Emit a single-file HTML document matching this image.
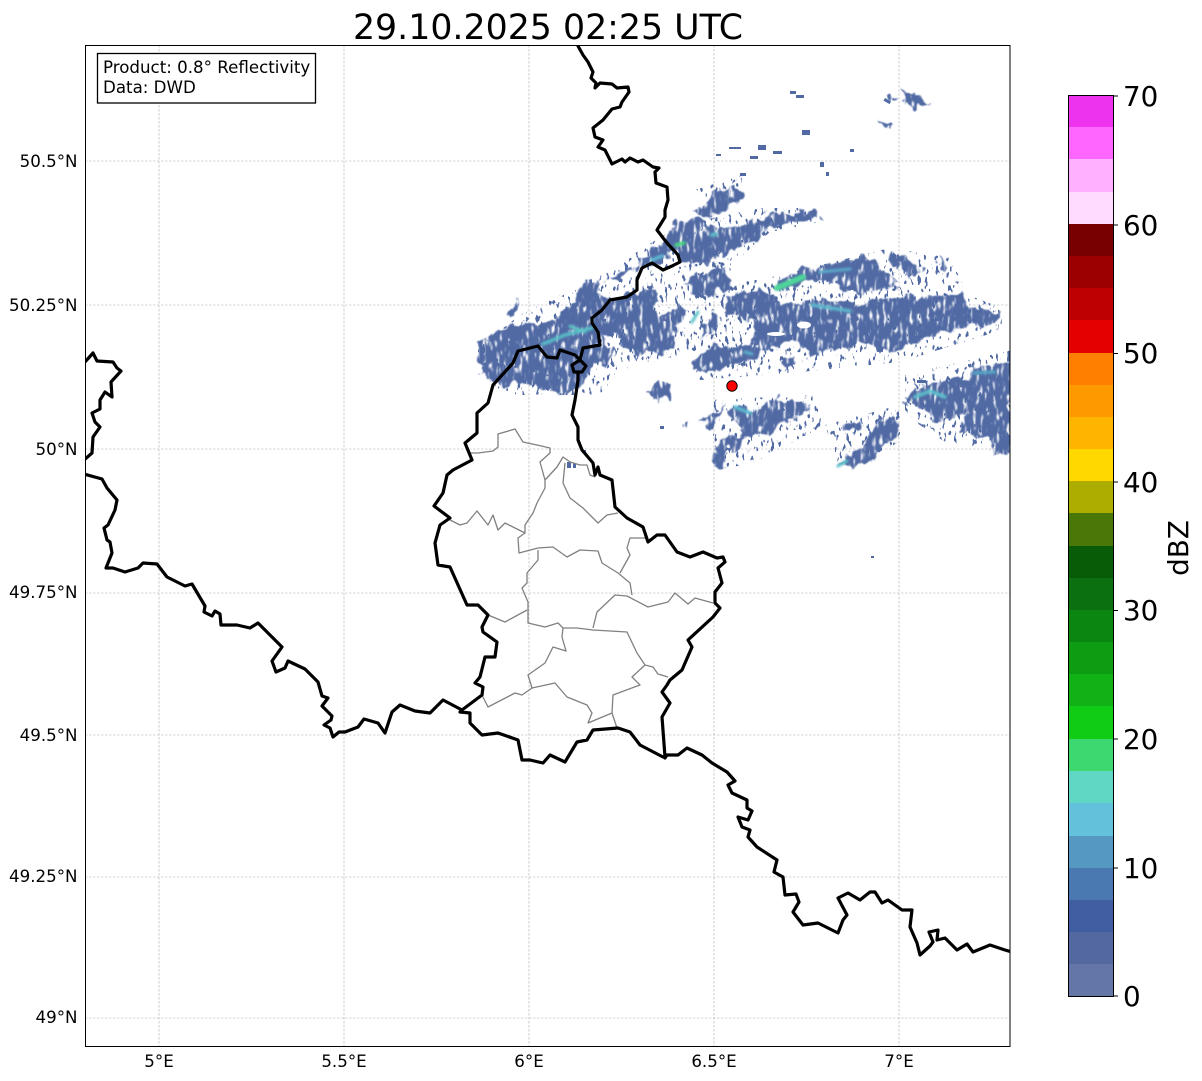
<!DOCTYPE html>
<html><head><meta charset="utf-8"><style>
html,body{margin:0;padding:0;background:#fff;width:1202px;height:1081px;overflow:hidden}
svg{display:block}
text{font-family:"DejaVu Sans","Liberation Sans",sans-serif;fill:#000}
.t{font-size:16.67px}
.c{font-size:27.78px}
</style></head><body>
<svg width="1202" height="1081" viewBox="0 0 1202 1081" xmlns="http://www.w3.org/2000/svg">
<defs>
<clipPath id="ax"><rect x="85" y="45" width="925" height="1001"/></clipPath>
<filter id="rad" x="-5%" y="-5%" width="110%" height="110%" color-interpolation-filters="sRGB">
<feTurbulence type="fractalNoise" baseFrequency="0.09 0.07" numOctaves="3" seed="4" result="n1"/>
<feDisplacementMap in="SourceGraphic" in2="n1" scale="16" xChannelSelector="R" yChannelSelector="G" result="d"/>
<feTurbulence type="fractalNoise" baseFrequency="0.3 0.08" numOctaves="2" seed="9" result="n2"/>
<feColorMatrix in="n2" type="matrix" values="0 0 0 0 0 0 0 0 0 0 0 0 0 0 0 6 0 0 0 -1.6" result="m"/>
<feComposite in="d" in2="m" operator="in"/>
<feGaussianBlur stdDeviation="0.45"/>
</filter>
<filter id="fr" x="-5%" y="-5%" width="110%" height="110%" color-interpolation-filters="sRGB">
<feTurbulence type="fractalNoise" baseFrequency="0.28 0.13" numOctaves="2" seed="21" result="n"/>
<feColorMatrix in="n" type="matrix" values="0 0 0 0 0 0 0 0 0 0 0 0 0 0 0 22 0 0 0 -13.6" result="m"/>
<feComposite in="SourceGraphic" in2="m" operator="in"/>
<feGaussianBlur stdDeviation="0.35"/>
</filter>
<filter id="soft" x="-20%" y="-50%" width="140%" height="200%"><feGaussianBlur stdDeviation="1"/></filter>
</defs>
<rect width="1202" height="1081" fill="#fff"/>

<g stroke="#adadad" stroke-width="0.6" stroke-dasharray="2.5 1.5" fill="none">
<path d="M159 45V1046M344 45V1046M529 45V1046M714 45V1046M899 45V1046"/>
<path d="M85 161H1010M85 305H1010M85 449H1010M85 593H1010M85 735H1010M85 877H1010M85 1018H1010"/>
</g>

<g clip-path="url(#ax)">
<g filter="url(#fr)" fill="#516aa4">
<polygon points="475,350 520,315 600,275 680,225 760,208 815,208 820,222 770,232 735,262 700,350 620,370 600,395 500,395"/>
<polygon points="690,280 760,280 890,248 950,258 968,295 1002,308 1002,330 900,362 800,372 700,380 690,360"/>
<polygon points="710,400 815,395 825,425 750,465 715,468"/>
<polygon points="825,425 900,405 900,445 840,468"/>
<polygon points="905,375 1012,350 1012,455 945,442 905,415"/>
<polygon points="695,190 742,175 742,195 700,213"/>
</g>
<g filter="url(#rad)" fill="#516aa4">
<polygon points="477,342 497,332 520,322 553,320 573,300 590,282 600,282 597,293 607,300 633,293 653,292 652,310 660,317 680,305 687,307 677,330 673,347 660,352 640,353 623,348 620,335 600,338 613,353 607,367 597,360 588,377 583,387 570,393 553,392 527,383 500,385 480,373 478,360"/>
<polygon points="607,282 625,270 640,263 650,252 670,230 680,222 707,220 707,227 743,227 757,225 758,240 737,247 720,257 700,263 690,263 680,260 678,250 667,257 650,263 630,272 615,282"/>
<polygon points="690,213 717,193 737,183 742,200 717,215 700,217"/>
<polygon points="700,233 713,228 733,230 753,223 780,212 790,215 797,213 813,210 822,220 790,220 767,230 753,243 733,253 717,260 700,253"/>
<polygon points="688,283 717,267 727,267 730,283 713,297 693,297"/>
<polygon points="773,287 800,270 837,263 873,257 887,273 900,283 887,288 860,293 843,287 817,277 800,285 777,292"/>
<polygon points="890,250 927,270 913,277 890,260"/>
<polygon points="938,257 950,267 943,273"/>
<polygon points="813,297 857,307 883,297 913,297 960,293 967,307 1000,312 1000,322 967,327 927,337 900,350 860,343 810,357 795,337 797,320 813,313"/>
<polygon points="727,297 760,288 773,297 787,307 807,303 815,313 797,323 797,337 767,350 753,347 753,323 727,313"/>
<polygon points="700,327 713,313 720,320 710,337 700,340"/>
<polygon points="690,363 713,345 727,347 757,347 758,360 737,363 720,370 697,372"/>
<polygon points="727,293 757,290 758,317 740,313 727,310"/>
<polygon points="782,360 798,358 793,367 782,365"/>
<polygon points="730,407 753,410 777,400 813,405 807,413 783,420 767,437 743,437 733,420"/>
<polygon points="703,423 720,410 717,430 703,428"/>
<polygon points="713,460 720,437 743,433 740,443 727,453 730,467 717,467"/>
<polygon points="840,423 863,418 860,428 842,432"/>
<polygon points="837,463 860,450 877,423 897,413 897,433 873,457 850,468"/>
<polygon points="903,403 917,387 930,383 973,377 973,368 1002,367 1012,350 1012,453 997,453 990,437 963,433 967,413 947,417 933,420 920,407"/>
<polygon points="887,88 898,100 890,103 885,93"/>
<polygon points="900,87 932,103 913,108 905,100"/>
<polygon points="877,117 895,128 892,130 877,120"/>
<polygon points="648,390 660,378 670,383 667,397 658,402"/>
<polygon points="680,420 690,420 683,427"/>
<polygon points="700,420 723,407 717,425"/>
<polygon points="507,314 515,297 518,300 512,316"/>
<polygon points="640,300 655,293 660,300 645,312"/>
</g>
<g fill="#fff">
<ellipse cx="804" cy="325" rx="7" ry="3.5"/>
<ellipse cx="776" cy="334" rx="9" ry="2"/>
</g>
<g fill="#516aa4">
<rect x="790" y="91" width="6" height="3"/><rect x="796" y="95" width="8" height="3"/>
<rect x="802" y="130" width="8" height="5"/><rect x="729" y="147" width="12" height="2"/>
<rect x="758" y="145" width="8" height="5"/><rect x="773" y="151" width="9" height="3"/>
<rect x="750" y="156" width="8" height="3"/><rect x="716" y="154" width="5" height="2"/>
<rect x="820" y="162" width="4" height="5"/><rect x="850" y="149" width="4" height="3"/>
<rect x="740" y="173" width="6" height="3"/><rect x="826" y="172" width="3" height="4"/>
<rect x="871" y="556" width="3" height="2"/><rect x="660" y="426" width="4" height="3"/>
<rect x="567" y="462" width="4" height="6"/><rect x="573" y="463" width="3" height="5"/><rect x="582" y="450" width="4" height="3"/>
<rect x="885" y="98" width="7" height="3" transform="rotate(30 885 98)"/>
<rect x="917" y="380" width="9" height="3"/>
</g>
<g filter="url(#soft)" stroke-linecap="round" fill="none">
<path d="M543 344L565 335L592 328" stroke="#58bcc8" stroke-width="3.5"/>
<path d="M570 326L585 332" stroke="#5dc6c6" stroke-width="3"/>
<path d="M777 288L803 277" stroke="#4ed69a" stroke-width="6"/>
<path d="M820 272L850 269" stroke="#5aa9c9" stroke-width="3"/>
<path d="M812 305L850 311" stroke="#5cb6cc" stroke-width="3.5"/>
<path d="M698 312L692 322" stroke="#5cc2c8" stroke-width="3"/>
<path d="M735 407L750 413" stroke="#5cbcd0" stroke-width="3.5"/>
<path d="M915 397L930 391L945 397" stroke="#5cc0cc" stroke-width="3.5"/>
<path d="M974 373L995 372" stroke="#55a8c6" stroke-width="3"/>
<path d="M838 466L847 461" stroke="#5cc2c8" stroke-width="3"/>
<path d="M712 235L716 234" stroke="#5cb8c8" stroke-width="4"/>
<path d="M676 245L684 243" stroke="#44d480" stroke-width="3.5"/>
<path d="M652 260L662 256" stroke="#5cb8d0" stroke-width="3.5"/>
<path d="M745 352L752 354" stroke="#5cb0cc" stroke-width="3"/>
</g>

<g fill="none" stroke="#808080" stroke-width="1.3" stroke-linejoin="round">
<path d="M470 453L478 453L493 451L498 447L498 434L515 429L523 442L537 445L550 448L550 453L540 462L545 480L545 488L537 503L533 513L525 525L525 533L518 538L519 553L538 548L553 547L567 557L580 550L598 551L602 563L618 573L630 583L632 595"/>
<path d="M545 480L557 467L563 457L570 462L580 465L587 465L590 475L595 477"/>
<path d="M565 463L563 483L570 498L583 508L598 523L607 515L618 513"/>
<path d="M450 520L460 525L467 523L477 511L488 525L493 515L498 530L505 523L525 533"/>
<path d="M648 538L630 538L627 548L630 555L620 573"/>
<path d="M538 550L538 560L527 573L527 583L522 588L528 602L528 623L545 627L558 623L563 628L562 637L566 651L553 647L545 663L528 675L532 688L555 683L567 697L587 705L592 713L588 723L612 713L617 728"/>
<path d="M488 615L505 622L527 610"/>
<path d="M563 628L577 628L593 630L627 632L637 653L645 665L653 667L658 674L668 677"/>
<path d="M593 628L597 612L615 595L627 596L648 607L668 602L675 593L688 604L695 598L713 603"/>
<path d="M645 665L632 677L640 685L613 695L612 713"/>
<path d="M482 695L488 707L515 693L522 695L532 688"/>
</g>

<g fill="none" stroke="#000" stroke-width="3.2" stroke-linejoin="round" stroke-linecap="round">
<path d="M578 46L583 55L588 62L593 72L591 78L596 83L595 88L600 83L612 84L617 88L628 87L629 92L622 102L620 107L612 109L603 120L593 128L595 137L603 140L598 147L605 150L612 164L622 159L625 162L630 158L638 162L643 160L653 167L659 168L655 172L656 183L667 187L668 200L665 210L665 217L657 230L667 243L678 255L680 262L672 266L663 270L660 268L652 263L642 268L637 280L637 290L627 297L610 300L602 310L592 318L592 323L598 332L600 345L583 348L580 360L575 355L560 350L557 358L547 357L538 346L518 351L513 363L493 385L488 403L477 413L477 433L465 443L472 460L453 470L447 475L443 493L434 506L450 518L440 525L435 543L438 565L450 567L467 605L478 605L488 615L482 627L483 632L497 642L495 657L485 657L480 677L475 683L483 687L482 695L462 710L460 712L470 713L470 723L482 735L498 733L518 740L522 760L530 760L543 763L550 755L565 762L577 742L587 740L593 730L618 728L630 732L640 745L663 757"/>
<path d="M580 360L572 365L574 372L582 372L586 366L580 360M578 372L578 380L575 400L572 415L578 427L578 440L582 450L593 463L595 475L598 467L600 475L612 480L615 507L627 518L643 527L648 542L657 535L665 535L677 552L690 557L703 552L717 558L723 557L725 562L718 568L722 583L715 592L715 603L720 608L713 617L688 640L692 647L682 670L670 680L667 685L662 692L670 703L662 717L665 757"/>
<path d="M665 758L667 755L678 755L687 748L702 755L712 763L727 772L735 781L728 785L732 793L747 800L747 808L752 811L748 820L738 817L742 827L750 830L748 837L757 847L777 860L774 872L783 877L785 895L796 894L799 902L793 912L803 925L818 923L838 933L843 920L847 915L838 898L848 893L860 900L870 892L875 892L882 903L888 900L902 910L912 910L910 927L917 943L920 955L930 946L933 942L929 932L938 930L937 940L945 938L957 950L967 944L973 952L990 945L1005 950L1012 952"/>
<path d="M84 363L93 353L97 361L113 362L117 368L121 371L111 382L112 397L105 392L100 400L100 409L92 413L95 422L100 427L93 437L92 453L84 460"/>
<path d="M84 474L102 479L107 488L117 500L115 510L108 525L104 528L107 540L110 542L112 553L106 568L113 568L125 572L138 568L143 563L157 564L167 577L185 586L192 584L205 606L204 612L212 616L215 611L220 614L221 625L237 625L250 628L258 623L282 647L272 661L276 672L285 668L288 661L305 669L318 682L322 696L328 698L322 706L332 716L331 720L324 725L330 728L333 737L339 732L345 732L358 727L364 719L378 723L385 733L392 712L400 705L415 711L430 713L443 700L462 710"/>
</g>
<circle cx="732" cy="386" r="5.200" fill="#f00" stroke="#000" stroke-width="1"/>
</g>
<rect x="85.500" y="45.500" width="924.500" height="1001" fill="none" stroke="#000" stroke-width="1"/>

<rect x="97.500" y="53.500" width="218" height="49.500" fill="#fff" stroke="#000" stroke-width="1.300"/>
<text class="t" x="103" y="73">Product: 0.8° Reflectivity</text>
<text class="t" x="103" y="93">Data: DWD</text>

<text x="548" y="39" text-anchor="middle" style="font-size:34.75px">29.10.2025 02:25 UTC</text>

<g text-anchor="end">
<text class="t" x="77.500" y="167">50.5°N</text>
<text class="t" x="77.500" y="311">50.25°N</text>
<text class="t" x="77.500" y="455">50°N</text>
<text class="t" x="77.500" y="598">49.75°N</text>
<text class="t" x="77.500" y="741">49.5°N</text>
<text class="t" x="77.500" y="882">49.25°N</text>
<text class="t" x="77.500" y="1023">49°N</text>
</g>
<g text-anchor="middle">
<text class="t" x="159" y="1067">5°E</text>
<text class="t" x="344" y="1067">5.5°E</text>
<text class="t" x="529" y="1067">6°E</text>
<text class="t" x="714" y="1067">6.5°E</text>
<text class="t" x="899" y="1067">7°E</text>
</g>

<g shape-rendering="crispEdges">
<rect x="1068" y="95" width="45" height="32.5" fill="#ee33ee"/>
<rect x="1068" y="127" width="45" height="32.5" fill="#ff66ff"/>
<rect x="1068" y="159" width="45" height="33.5" fill="#ffb0ff"/>
<rect x="1068" y="192" width="45" height="32.5" fill="#ffdcff"/>
<rect x="1068" y="224" width="45" height="32.5" fill="#780000"/>
<rect x="1068" y="256" width="45" height="32.5" fill="#9c0000"/>
<rect x="1068" y="288" width="45" height="32.5" fill="#be0000"/>
<rect x="1068" y="320" width="45" height="33.5" fill="#e40000"/>
<rect x="1068" y="353" width="45" height="32.5" fill="#ff8000"/>
<rect x="1068" y="385" width="45" height="32.5" fill="#ff9900"/>
<rect x="1068" y="417" width="45" height="32.5" fill="#ffb400"/>
<rect x="1068" y="449" width="45" height="32.5" fill="#ffd800"/>
<rect x="1068" y="481" width="45" height="32.5" fill="#adad00"/>
<rect x="1068" y="513" width="45" height="33.5" fill="#4a7808"/>
<rect x="1068" y="546" width="45" height="32.5" fill="#085c08"/>
<rect x="1068" y="578" width="45" height="32.5" fill="#0a7010"/>
<rect x="1068" y="610" width="45" height="32.5" fill="#0b8610"/>
<rect x="1068" y="642" width="45" height="32.5" fill="#0d9c12"/>
<rect x="1068" y="674" width="45" height="32.5" fill="#10b216"/>
<rect x="1068" y="706" width="45" height="33.5" fill="#10cc14"/>
<rect x="1068" y="739" width="45" height="32.5" fill="#3ed870"/>
<rect x="1068" y="771" width="45" height="32.5" fill="#60d6c4"/>
<rect x="1068" y="803" width="45" height="33.5" fill="#64c1dc"/>
<rect x="1068" y="836" width="45" height="32.5" fill="#5599c2"/>
<rect x="1068" y="868" width="45" height="32.5" fill="#4a79b1"/>
<rect x="1068" y="900" width="45" height="32.5" fill="#425ea2"/>
<rect x="1068" y="932" width="45" height="32.5" fill="#53689f"/>
<rect x="1068" y="964" width="45" height="32.5" fill="#6476a8"/>
</g>
<rect x="1068.500" y="95.500" width="45" height="901" fill="none" stroke="#000" stroke-width="1"/>
<path d="M1113 96h5M1113 225h5M1113 353.500h5M1113 482h5M1113 610.500h5M1113 739h5M1113 868h5M1113 996h5" stroke="#000" stroke-width="1" fill="none"/>
<text class="c" x="1123" y="106">70</text>
<text class="c" x="1123" y="235">60</text>
<text class="c" x="1123" y="363">50</text>
<text class="c" x="1123" y="492">40</text>
<text class="c" x="1123" y="620">30</text>
<text class="c" x="1123" y="749">20</text>
<text class="c" x="1123" y="878">10</text>
<text class="c" x="1123" y="1006">0</text>
<text class="c" text-anchor="middle" transform="translate(1188,548) rotate(-90)">dBZ</text>
</svg>
</body></html>
